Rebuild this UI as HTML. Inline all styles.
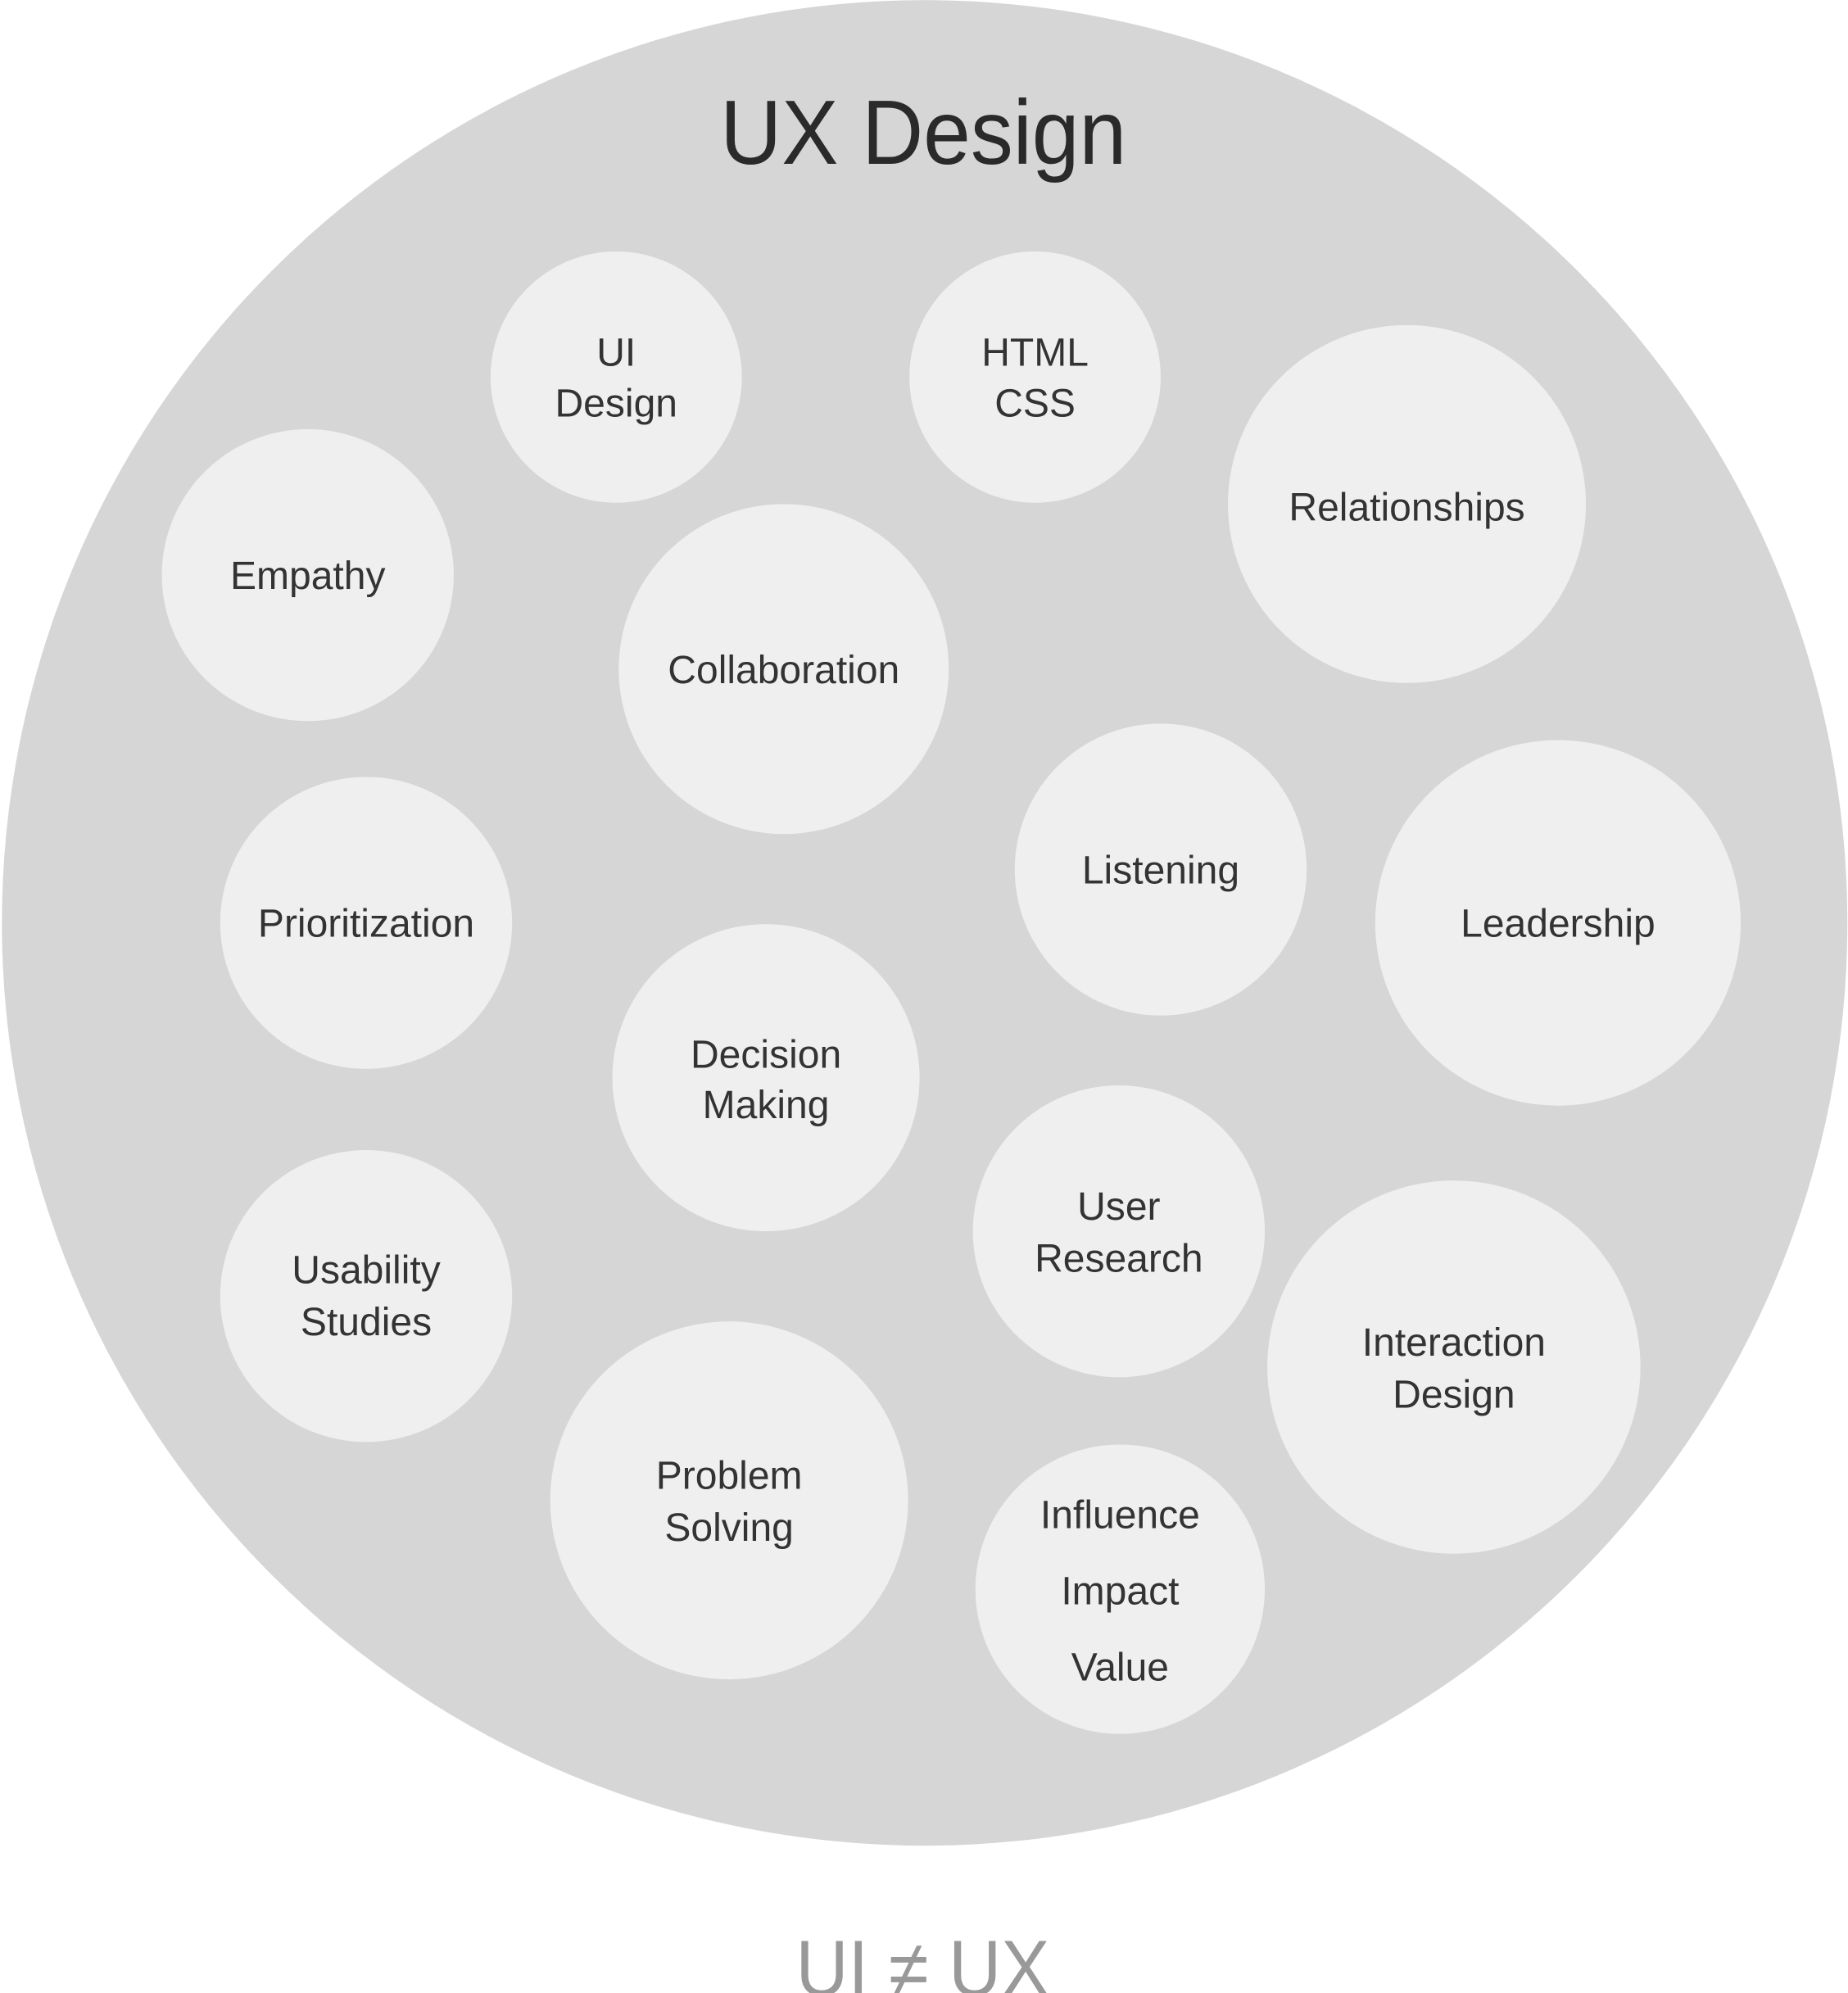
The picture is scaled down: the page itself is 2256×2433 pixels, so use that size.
<!DOCTYPE html>
<html><head><meta charset="utf-8"><style>html,body{margin:0;padding:0;background:#fff;overflow:hidden}svg{display:block}</style></head>
<body>
<svg width="2256" height="2433" viewBox="0 0 1456 1570" xmlns="http://www.w3.org/2000/svg" font-family="Liberation Sans, sans-serif">
<g transform="translate(1.5,1)">
<circle cx="727" cy="726" r="727" fill="#d6d6d6"/>
<text x="726" y="128" font-size="72" fill="#2a2a2a" text-anchor="middle" textLength="320" lengthAdjust="spacingAndGlyphs">UX Design</text>
<g fill="#efefef">
<circle cx="484" cy="296" r="99"/>
<circle cx="814" cy="296" r="99"/>
<circle cx="1107" cy="396" r="141"/>
<circle cx="241" cy="452" r="115"/>
<circle cx="616" cy="526" r="130"/>
<circle cx="913" cy="684" r="115"/>
<circle cx="1226" cy="726" r="144"/>
<circle cx="287" cy="726" r="115"/>
<circle cx="602" cy="848" r="121"/>
<circle cx="880" cy="969" r="115"/>
<circle cx="287" cy="1020" r="115"/>
<circle cx="1144" cy="1076" r="147"/>
<circle cx="573" cy="1181" r="141"/>
<circle cx="881" cy="1251" r="114"/>
</g>
<g font-size="31" fill="#333" text-anchor="middle">
<text x="484" y="287">UI</text><text x="484" y="327">Design</text>
<text x="814" y="287">HTML</text><text x="814" y="327">CSS</text>
<text x="1107" y="409">Relationships</text>
<text x="241" y="463">Empathy</text>
<text x="616" y="537">Collaboration</text>
<text x="913" y="695">Listening</text>
<text x="1226" y="737">Leadership</text>
<text x="287" y="737">Prioritization</text>
<text x="602" y="840">Decision</text><text x="602" y="880">Making</text>
<text x="880" y="960">User</text><text x="880" y="1001">Research</text>
<text x="287" y="1010">Usability</text><text x="287" y="1051">Studies</text>
<text x="1144" y="1067">Interaction</text><text x="1144" y="1108">Design</text>
<text x="573" y="1172">Problem</text><text x="573" y="1213">Solving</text>
<text x="881" y="1203">Influence</text><text x="881" y="1263">Impact</text><text x="881" y="1323">Value</text>
</g>
</g>
<text x="727" y="1572" font-size="62" fill="#999" text-anchor="middle" textLength="200" lengthAdjust="spacingAndGlyphs">UI ≠ UX</text>
</svg>
</body></html>
